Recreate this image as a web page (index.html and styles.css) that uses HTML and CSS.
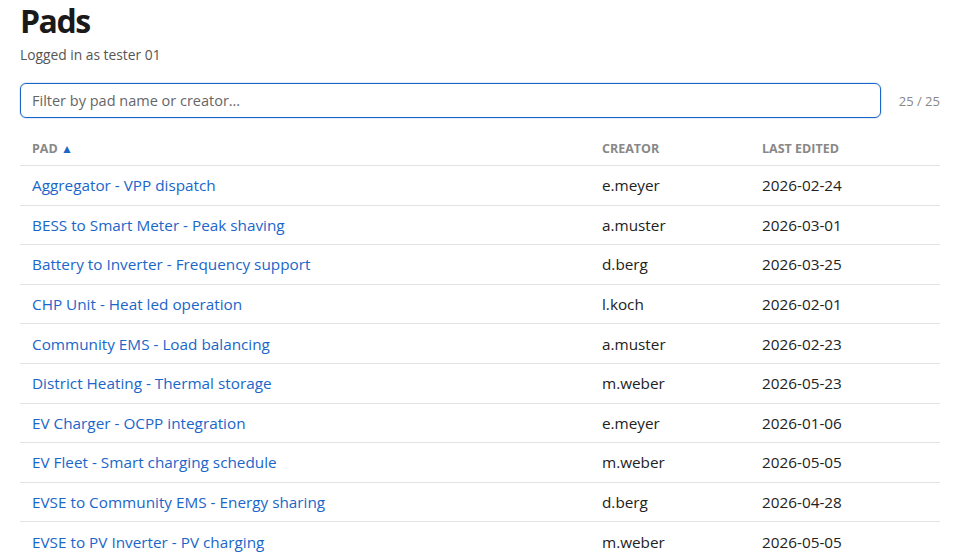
FILE: index.html
```html
<!DOCTYPE html>
<html>
<head>
<meta charset="utf-8">
<link rel="stylesheet" href="styles.css">
</head>
<body>
<main class="page">
  <h1 class="title">Pads</h1>
  <p class="user">Logged in as tester 01</p>
  <div class="filter-row">
    <input class="filter" type="text" placeholder="Filter by pad name or creator…">
    <span class="count">25 / 25</span>
  </div>
  <table class="pads">
    <thead>
      <tr>
        <th class="c-pad">PAD <span class="sort">▲</span></th>
        <th class="c-creator">CREATOR</th>
        <th class="c-date">LAST EDITED</th>
      </tr>
    </thead>
    <tbody>
      <tr><td><a href="#">Aggregator - VPP dispatch</a></td><td>e.meyer</td><td>2026-02-24</td></tr>
      <tr><td><a href="#">BESS to Smart Meter - Peak shaving</a></td><td>a.muster</td><td>2026-03-01</td></tr>
      <tr><td><a href="#">Battery to Inverter - Frequency support</a></td><td>d.berg</td><td>2026-03-25</td></tr>
      <tr><td><a href="#">CHP Unit - Heat led operation</a></td><td>l.koch</td><td>2026-02-01</td></tr>
      <tr><td><a href="#">Community EMS - Load balancing</a></td><td>a.muster</td><td>2026-02-23</td></tr>
      <tr><td><a href="#">District Heating - Thermal storage</a></td><td>m.weber</td><td>2026-05-23</td></tr>
      <tr><td><a href="#">EV Charger - OCPP integration</a></td><td>e.meyer</td><td>2026-01-06</td></tr>
      <tr><td><a href="#">EV Fleet - Smart charging schedule</a></td><td>m.weber</td><td>2026-05-05</td></tr>
      <tr><td><a href="#">EVSE to Community EMS - Energy sharing</a></td><td>d.berg</td><td>2026-04-28</td></tr>
      <tr><td><a href="#">EVSE to PV Inverter - PV charging</a></td><td>m.weber</td><td>2026-05-05</td></tr>
    </tbody>
  </table>
</main>
</body>
</html>
```

FILE: styles.css
```css
* { box-sizing: border-box; }
html, body { margin: 0; padding: 0; background: #fff; }
body {
  font-family: "Open Sans", "Noto Sans", sans-serif;
  color: #222;
}
.page { padding: 0 13px 0 20px; }
.title {
  margin: 0;
  padding-top: 2px;
  font-size: 32px;
  line-height: 38px;
  font-weight: 700;
  color: #1a1a1a;
  letter-spacing: -1.5px;
}
.user {
  margin: 6px 0 0;
  font-size: 13.8px;
  line-height: 18px;
  color: #555;
}
.filter-row {
  margin-top: 19px;
  display: flex;
  align-items: center;
  gap: 16px;
}
.filter {
  flex: 1;
  height: 35px;
  border: 1px solid #1a66c9;
  border-radius: 6px;
  padding: 0 11px;
  font-family: inherit;
  font-size: 14.5px;
  color: #222;
  outline: none;
  box-shadow: 0 0 0 1px rgba(26,102,201,0.12);
}
.filter::placeholder { color: #666; }
.count {
  font-size: 13px;
  color: #888;
  width: 43px;
  text-align: right;
}
.pads {
  margin-top: 16px;
  width: 920px;
  border-collapse: collapse;
  font-size: 15.3px;
}
.pads th {
  text-align: left;
  font-size: 12.5px;
  font-weight: 700;
  color: #888;
  padding: 6px 12px 8px;
  line-height: 17px;
  border-bottom: 1px solid #e3e3e3;
}
.c-pad { width: 570px; }
.c-creator { width: 160px; }
.sort { color: #1a66c9; font-size: 12px; }
.pads td {
  padding: 0 12px;
  height: 39.6px;
  border-bottom: 1px solid #e3e3e3;
  color: #222;
}
.pads a {
  color: #1a66c9;
  text-decoration: none;
}
```
